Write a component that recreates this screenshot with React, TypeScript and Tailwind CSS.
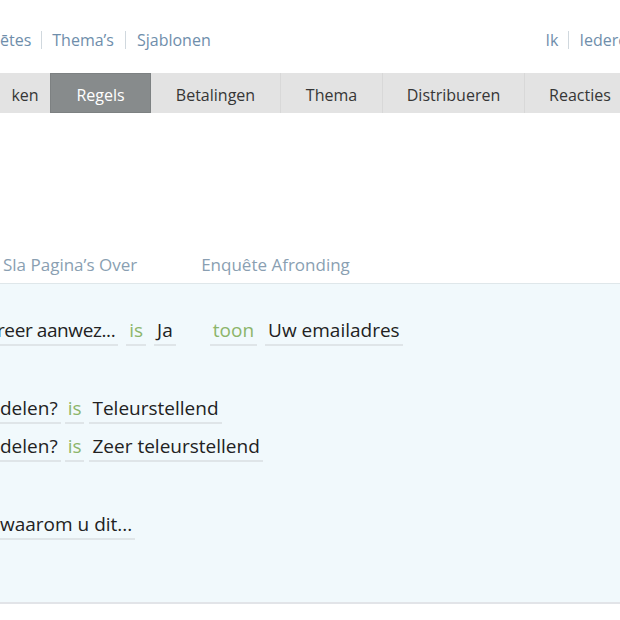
import React from "react";

const Token = ({ children, green = false, tight = false }: { children: React.ReactNode; green?: boolean; tight?: boolean }) => (
  <span
    className={`inline-block px-[3px] pb-[1px] border-b-2 border-[#dfe5e8] leading-[26px] ${
      green ? "text-[#8cb56a]" : "text-[#222222]"
    } ${tight ? "tracking-[-0.4px]" : ""}`}
  >
    {children}
  </span>
);

export default function App() {
  const tabs = [
    { label: "ken", w: "w-[50px]", active: false, border: false },
    { label: "Regels", w: "w-[101px]", active: true, border: false },
    { label: "Betalingen", w: "w-[130px]", active: false, border: true },
    { label: "Thema", w: "w-[102px]", active: false, border: true },
    { label: "Distribueren", w: "w-[142px]", active: false, border: true },
    { label: "Reacties", w: "w-[110px]", active: false, border: false },
  ];
  return (
    <div
      className="w-[620px] h-[620px] bg-white overflow-hidden relative"
      style={{ fontFamily: '"Open Sans", "Noto Sans", sans-serif' }}
    >
      {/* top links */}
      <div className="h-[73px] flex items-start justify-between pt-[28px] text-[16px] text-[#6f8eab] whitespace-nowrap">
        <div className="flex items-center">
          <span>ētes</span>
          <span className="mx-[10px] w-px h-[18px] bg-[#d0d8de]" />
          <span>Thema’s</span>
          <span className="mx-[11px] w-px h-[18px] bg-[#d0d8de]" />
          <span>Sjablonen</span>
        </div>
        <div className="flex items-center -mr-[26px]">
          <span>Ik</span>
          <span className="mx-[10px] w-px h-[18px] bg-[#d0d8de]" />
          <span>Iedereen</span>
        </div>
      </div>

      {/* main tab bar */}
      <div className="h-[40px] bg-[#e3e3e3] flex text-[16px] text-[#363636] whitespace-nowrap">
        {tabs.map((t) => (
          <div
            key={t.label}
            className={`${t.w} shrink-0 h-full flex items-center justify-center pt-[4px] ${
              t.active ? "bg-[#878b8c] text-white border border-[#7d8182]" : ""
            } ${t.border ? "border-r border-[#d8d8d8]" : ""}`}
          >
            {t.label}
          </div>
        ))}
      </div>

      {/* sub tabs */}
      <div className="h-[170px] flex items-end text-[17px] text-[#8a9fb2] pb-[6px] whitespace-nowrap">
        <span className="ml-[3px]">Sla Pagina’s Over</span>
        <span className="ml-[64px]">Enquête Afronding</span>
      </div>

      {/* rules panel */}
      <div className="h-[321px] bg-[#f1f9fc] border-t border-[#dfe7ea] border-b-2 border-b-[#e2e4e8] text-[19px] whitespace-nowrap">
        <div className="pt-[33px] flex items-end -ml-[6px]">
          <Token tight>reer aanwez...</Token>
          <span className="w-[8px]" />
          <Token green>is</Token>
          <span className="w-[8px]" />
          <Token>Ja</Token>
          <span className="w-[34px]" />
          <Token green>toon</Token>
          <span className="w-[8px]" />
          <Token>Uw emailadres</Token>
        </div>
        <div className="mt-[49px] flex items-end -ml-[3px]">
          <Token>delen?</Token>
          <span className="w-[4px]" />
          <Token green>is</Token>
          <span className="w-[5px]" />
          <Token>Teleurstellend</Token>
        </div>
        <div className="mt-[9px] flex items-end -ml-[3px]">
          <Token>delen?</Token>
          <span className="w-[4px]" />
          <Token green>is</Token>
          <span className="w-[5px]" />
          <Token>Zeer teleurstellend</Token>
        </div>
        <div className="mt-[49px] flex items-end -ml-[3px]">
          <Token>waarom u dit...</Token>
        </div>
      </div>
    </div>
  );
}
